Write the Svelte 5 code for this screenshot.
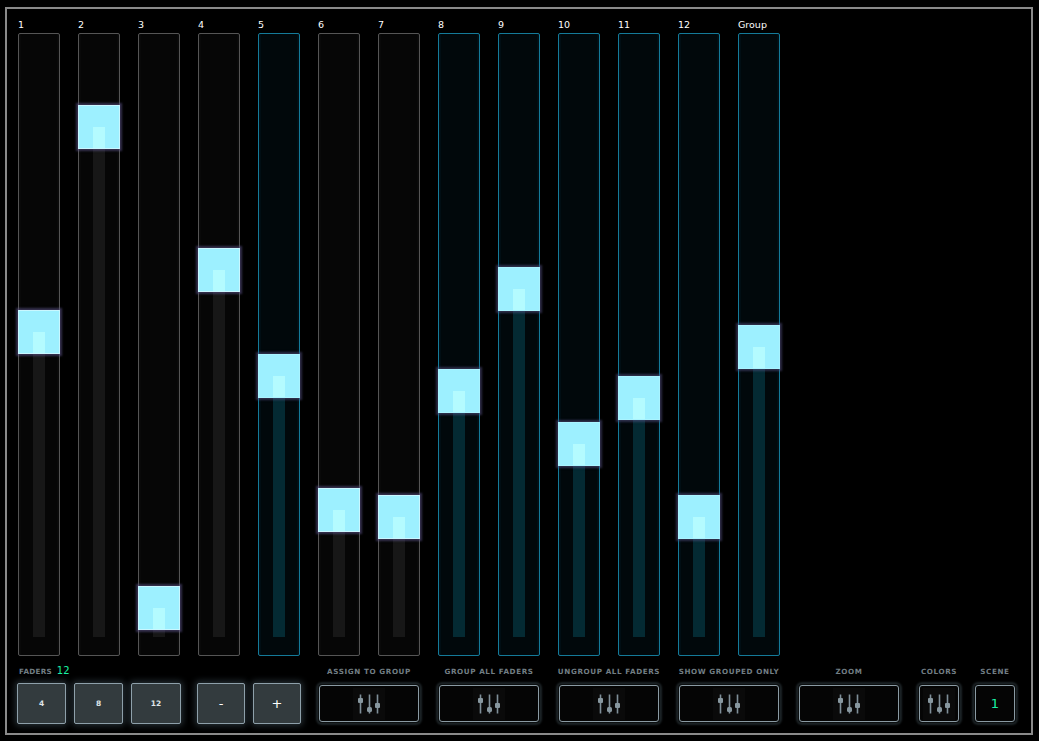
<script lang="ts">
	const faders = [
		{ label: '1', top: 311, grouped: false },
		{ label: '2', top: 106, grouped: false },
		{ label: '3', top: 587, grouped: false },
		{ label: '4', top: 249, grouped: false },
		{ label: '5', top: 355, grouped: true },
		{ label: '6', top: 489, grouped: false },
		{ label: '7', top: 496, grouped: false },
		{ label: '8', top: 370, grouped: true },
		{ label: '9', top: 268, grouped: true },
		{ label: '10', top: 423, grouped: true },
		{ label: '11', top: 377, grouped: true },
		{ label: '12', top: 496, grouped: true },
		{ label: 'Group', top: 326, grouped: true }
	];
	const TRACK_TOP = 33;
	const wideButtons = ['ASSIGN TO GROUP', 'GROUP ALL FADERS', 'UNGROUP ALL FADERS', 'SHOW GROUPED ONLY', 'ZOOM'];
</script>

{#snippet sliders()}
	<span class="icon-box">
		<svg width="32" height="32" viewBox="0 0 32 32">
			<path d="M7.5 6.5v19M16.5 6.5v19M24.5 6.5v19" fill="none" stroke="#7f8f99" stroke-width="1.6" />
			<g fill="#87979f">
				<rect x="5" y="10" width="5" height="5" rx="1" />
				<rect x="14" y="19" width="5" height="5" rx="1.5" />
				<rect x="22" y="15" width="5" height="5" rx="1" />
			</g>
		</svg>
	</span>
{/snippet}

<div class="panel">
	<div class="faders">
		{#each faders as f}
			<div class="strip">
				<div class="name">{f.label}</div>
				<div class="track" class:grouped={f.grouped}>
					<div class="fill" style="top: {f.top - TRACK_TOP + 20}px"></div>
					<div class="thumb" style="top: {f.top - TRACK_TOP - 2}px"></div>
					<div class="fill over" style="top: {f.top - TRACK_TOP + 20}px; height: 21px"></div>
				</div>
			</div>
		{/each}
	</div>

	<div class="controls">
		<div class="group count">
			<div class="label left">FADERS <span class="value">12</span></div>
			<div class="row">
				<button class="solid w49">4</button>
				<button class="solid w49">8</button>
				<button class="solid w50">12</button>
				<button class="solid w48 sign">-</button>
				<button class="solid w48 sign">+</button>
			</div>
		</div>
		{#each wideButtons as name}
			<div class="group wide">
				<div class="label">{name}</div>
				<button class="dark">{@render sliders()}</button>
			</div>
		{/each}
		<div class="group narrow">
			<div class="label">COLORS</div>
			<button class="dark">{@render sliders()}</button>
		</div>
		<div class="group narrow scene">
			<div class="label">SCENE</div>
			<button class="dark">1</button>
		</div>
	</div>
</div>

<style>
	:global(body) {
		background: #000;
		font-family: 'DejaVu Sans', Verdana, sans-serif;
	}

	.panel {
		box-sizing: border-box;
		width: 1028px;
		height: 728px;
		margin: 7px 0 0 5px;
		padding: 0 0 0 11px;
		border: 2px solid #8a8a8a;
		background: #000;
	}

	.faders {
		display: flex;
		gap: 18px;
	}

	.strip {
		width: 42px;
	}

	.name {
		height: 24px;
		padding-top: 10px;
		box-sizing: border-box;
		font-size: 9.5px;
		line-height: 12px;
		color: #fff;
		white-space: nowrap;
	}

	.track {
		position: relative;
		box-sizing: border-box;
		height: 623px;
		border: 1px solid #555;
		border-radius: 2px;
		background: #060606;
		box-shadow: inset 2px 0 1px #0b0b0b, inset -2px 0 1px #0b0b0b;
	}

	.track.grouped {
		border-color: #147a99;
		background: #01080b;
		box-shadow: inset 2px 0 1px #021016, inset -2px 0 1px #021016;
	}

	.fill {
		position: absolute;
		left: 14px;
		width: 12px;
		bottom: 18px;
		background: #171717;
	}

	.grouped .fill {
		background: #042a33;
	}

	.fill.over,
	.grouped .fill.over {
		bottom: auto;
		background: rgba(190, 255, 255, 0.7);
	}

	.thumb {
		position: absolute;
		left: -1px;
		right: -1px;
		height: 44px;
		background: #9df0ff;
		box-shadow: inset 0 0 0 1px rgba(255, 255, 255, 0.45), 0 0 2px 2px rgba(95, 85, 140, 0.55);
	}

	.grouped .thumb {
		box-shadow: inset 0 0 0 1px rgba(190, 250, 255, 0.4), 0 0 2px 2px rgba(90, 85, 140, 0.5);
	}

	.controls {
		display: flex;
		gap: 20px;
		margin-top: 9px;
		margin-left: -1px;
	}

	.group {
		display: flex;
		flex-direction: column;
	}

	.group.wide {
		width: 100px;
	}

	.group.narrow {
		width: 40px;
	}

	.group.scene {
		margin-left: -4px;
	}

	.count {
		margin-right: -2px;
	}

	.label {
		height: 17px;
		margin: 1px -30px 0;
		font-size: 7.2px;
		line-height: 12px;
		letter-spacing: 0.6px;
		font-weight: 700;
		color: #727e84;
		text-align: center;
		white-space: nowrap;
	}

	.label.left {
		margin: 0;
		height: 18px;
		text-align: left;
		padding-left: 2px;
		letter-spacing: 0.3px;
	}

	.value {
		font-size: 10px;
		font-weight: 400;
		letter-spacing: 0;
		color: #19f0a5;
		margin-left: 2px;
	}

	.row {
		display: flex;
		gap: 8px;
	}

	button {
		box-sizing: border-box;
		padding: 0;
		font-family: inherit;
		cursor: pointer;
	}

	.solid {
		height: 41px;
		border: 1px solid #8ea0aa;
		border-radius: 2px;
		background: #333b3e;
		color: #dfe5e8;
		font-size: 7.5px;
		font-weight: 700;
		box-shadow: 0 0 6px 2px rgba(120, 150, 165, 0.3);
	}

	.w49 {
		width: 49px;
	}

	.w50 {
		width: 50px;
		margin-right: 8px;
	}

	.w48 {
		width: 48px;
	}

	.sign {
		font-size: 13px;
		font-weight: 400;
		color: #fff;
	}

	.dark {
		display: flex;
		align-items: center;
		justify-content: center;
		width: 100%;
		height: 37px;
		margin-top: 2px;
		border: 1px solid #8a9aa3;
		border-radius: 3px;
		background: #050505;
		box-shadow: 0 0 0 1px #0c0f10, 0 0 2px 3px #1c2326;
		font-size: 13px;
		color: #19f0a5;
	}

	.icon-box {
		display: block;
		width: 32px;
		height: 32px;
		background: #0a0a0a;
	}

	.icon-box svg {
		display: block;
	}
</style>
